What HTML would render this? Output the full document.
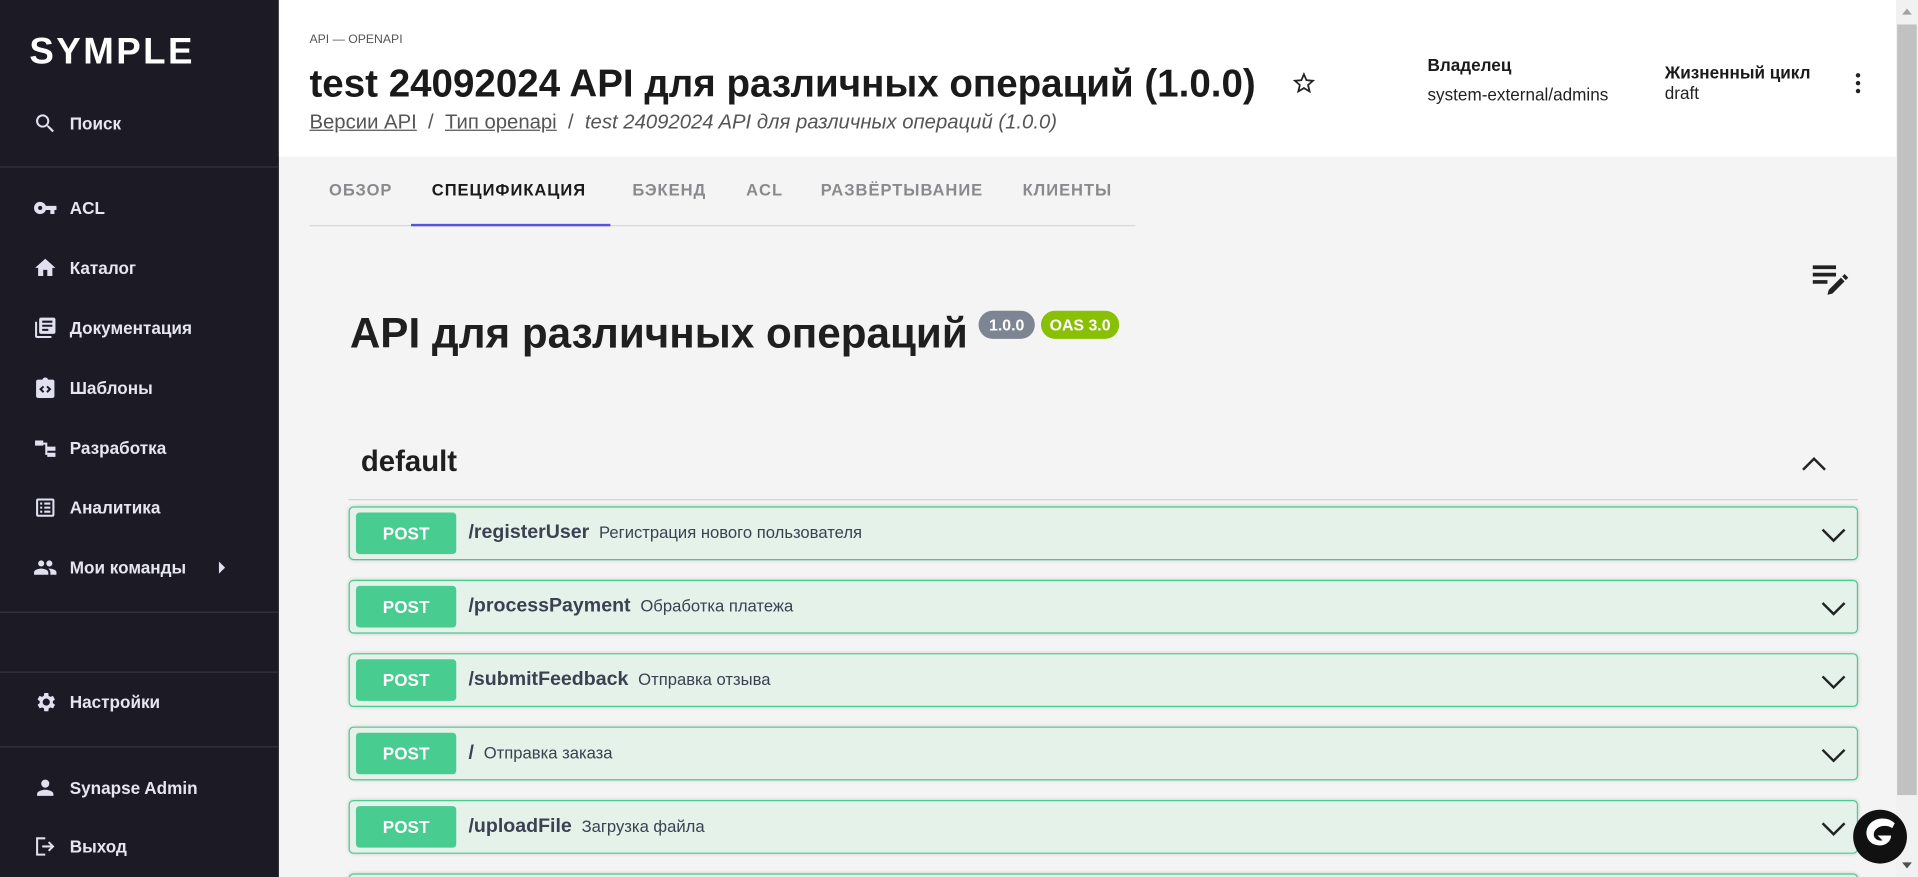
<!DOCTYPE html>
<html><head><meta charset="utf-8"><style>
*{box-sizing:border-box;margin:0;padding:0}
html,body{width:1918px;height:877px;overflow:hidden;background:#f4f4f4}
#w{width:1568px;height:717px;overflow:hidden;transform:scale(1.2232);transform-origin:0 0;position:relative;font-family:"Liberation Sans","DejaVu Sans",sans-serif;background:#f4f4f4}
.a{position:absolute}
#sb{left:0;top:0;width:228px;height:717px;background:#1c1b25;color:#e6e6f2}
.mi{position:absolute;left:0;width:228px;height:24px;display:flex;align-items:center;font-size:14px;font-weight:bold}
.mi svg{position:absolute;left:27px;width:20px;height:20px;fill:#e0e0f0}
.mi span{position:absolute;left:57px}
.dv{position:absolute;left:0;width:228px;height:1px;background:#33343f}
#hd{left:228px;top:0;width:1322px;height:128px;background:#fff}
.tab{position:absolute;top:148px;font-size:13.5px;font-weight:bold;letter-spacing:.8px;color:#8a8a8e}
.op{position:absolute;left:285px;width:1234px;height:44px;background:#e4f2ea;border:1px solid #49cc90;border-radius:4px;box-shadow:0 0 3px rgba(0,0,0,.15)}
.op .m{position:absolute;left:5px;top:4px;width:82px;height:34px;background:#49cc90;border-radius:3px;color:#fff;font-weight:bold;font-size:14px;text-align:center;line-height:34px}
.op .p{position:absolute;left:97px;top:12px;font-size:16px;font-weight:bold;color:#3b4151}
.op .p small{font-size:13.6px;font-weight:normal;margin-left:8px;color:#3b4151}
.op svg{position:absolute;right:8px;top:14px}
</style></head><body><div id="w">
<div id="sb" class="a">
<div class="a" style="left:24px;top:26px;font-size:30px;font-weight:bold;letter-spacing:2px;color:#fff">SYMPLE</div>
<div class="mi" style="top:89px"><svg viewBox="0 0 24 24"><path d="M15.5 14h-.8l-.3-.3A6.5 6.5 0 1 0 9.5 16a6.5 6.5 0 0 0 4.2-1.6l.3.3v.8l5 5 1.5-1.5-5-5zm-6 0a4.5 4.5 0 1 1 0-9 4.5 4.5 0 0 1 0 9z"/></svg><span>Поиск</span></div>
<div class="dv" style="top:136px"></div>
<div class="mi" style="top:158px"><svg viewBox="0 0 24 24"><path d="M12.6 10A6 6 0 1 0 12.6 14H17v4h4v-4h2v-4H12.6zM7 14a2 2 0 1 1 0-4 2 2 0 0 1 0 4z"/></svg><span>ACL</span></div>
<div class="mi" style="top:207px"><svg viewBox="0 0 24 24"><path d="M10 20v-6h4v6h5v-8h3L12 3 2 12h3v8z"/></svg><span>Каталог</span></div>
<div class="mi" style="top:256px"><svg viewBox="0 0 24 24"><path d="M4 6H2v14a2 2 0 0 0 2 2h14v-2H4V6zm16-4H8a2 2 0 0 0-2 2v12a2 2 0 0 0 2 2h12a2 2 0 0 0 2-2V4a2 2 0 0 0-2-2zm-1 9H9V9h10v2zm-4 4H9v-2h6v2zm4-8H9V5h10v2z"/></svg><span>Документация</span></div>
<div class="mi" style="top:305px"><svg viewBox="0 0 24 24"><path d="M19 4h-4.2C14.4 2.8 13.3 2 12 2s-2.4.8-2.8 2H5a2 2 0 0 0-2 2v14a2 2 0 0 0 2 2h14a2 2 0 0 0 2-2V6a2 2 0 0 0-2-2zm-8 11.6L9.6 17 6 13.4 9.6 10 11 11.4 8.8 13.4 11 15.6zm3.4 1.4L13 15.6l2.2-2.2L13 11.4l1.4-1.4 3.6 3.4L14.4 17z"/></svg><span>Шаблоны</span></div>
<div class="mi" style="top:354px"><svg viewBox="0 0 24 24"><path d="M2 5h8v5H2zM10 7h4v2h-4zM12 7h2v12h-2zM14 11h8v4h-8zM14 17h8v4h-8z"/></svg><span>Разработка</span></div>
<div class="mi" style="top:403px"><svg viewBox="0 0 24 24"><path d="M19 3H5a2 2 0 0 0-2 2v14a2 2 0 0 0 2 2h14a2 2 0 0 0 2-2V5a2 2 0 0 0-2-2zm0 16H5V5h14v14zM11 7h6v2h-6zm0 4h6v2h-6zm0 4h6v2h-6zM7 7h2v2H7zm0 4h2v2H7zm0 4h2v2H7z"/></svg><span>Аналитика</span></div>
<div class="mi" style="top:452px"><svg viewBox="0 0 24 24"><path d="M16 11a3 3 0 1 0 0-6 3 3 0 0 0 0 6zm-8 0a3 3 0 1 0 0-6 3 3 0 0 0 0 6zm0 2c-2.3 0-7 1.2-7 3.5V19h14v-2.5C15 14.2 10.3 13 8 13zm8 0h-1c1.2.8 2 2 2 3.5V19h6v-2.5c0-2.3-4.7-3.5-7-3.5z"/></svg><span>Мои команды</span><i style="position:absolute;left:179px;width:0;height:0;border-left:5px solid #e0e0f0;border-top:5px solid transparent;border-bottom:5px solid transparent"></i></div>
<div class="dv" style="top:500px"></div>
<div class="dv" style="top:549px"></div>
<div class="mi" style="top:562px"><svg viewBox="0 0 24 24"><path d="M19.4 13c0-.3.1-.6.1-1s0-.7-.1-1l2.1-1.6-2-3.5-2.5 1a7 7 0 0 0-1.7-1L15 3h-4l-.4 2.9a7 7 0 0 0-1.7 1l-2.5-1-2 3.5L6.6 11c0 .3-.1.6-.1 1s0 .7.1 1l-2.1 1.6 2 3.5 2.5-1c.5.4 1.1.7 1.7 1L11 21h4l.4-2.9c.6-.3 1.2-.6 1.7-1l2.5 1 2-3.5L19.4 13zM13 15.5a3.5 3.5 0 1 1 0-7 3.5 3.5 0 0 1 0 7z"/></svg><span>Настройки</span></div>
<div class="dv" style="top:610px"></div>
<div class="mi" style="top:632px"><svg viewBox="0 0 24 24"><path d="M12 12a4 4 0 1 0 0-8 4 4 0 0 0 0 8zm0 2c-2.7 0-8 1.3-8 4v2h16v-2c0-2.7-5.3-4-8-4z"/></svg><span>Synapse Admin</span></div>
<div class="mi" style="top:680px"><svg viewBox="0 0 24 24"><path d="M3 3h9v2H5v14h7v2H3zM16 7l5 5-5 5-1.4-1.4 2.6-2.6H9v-2h8.2l-2.6-2.6z"/></svg><span>Выход</span></div>
</div>
<div id="hd" class="a"></div>
<div class="a" style="left:253px;top:27px;font-size:10px;color:#555">API — OPENAPI</div>
<div class="a" style="left:253px;top:50px;font-size:31.5px;font-weight:bold;color:#1a1a1a;white-space:nowrap">test 24092024 API для различных операций (1.0.0)</div>
<svg class="a" style="left:1055px;top:57px" width="22" height="22" viewBox="0 0 24 24"><path fill="#222" d="M22 9.2l-7.2-.6L12 2 9.2 8.6 2 9.2l5.5 4.7L5.8 21 12 17.3 18.2 21l-1.6-7.1L22 9.2zM12 15.4l-3.8 2.3 1-4.3-3.3-2.9 4.4-.4L12 6.1l1.7 4 4.4.4-3.3 2.9 1 4.3z"/></svg>
<div class="a" style="left:253px;top:90px;font-size:16.6px;color:#555;white-space:nowrap"><u>Версии API</u> &nbsp;/&nbsp; <u>Тип openapi</u> &nbsp;/&nbsp; <i>test 24092024 API для различных операций (1.0.0)</i></div>
<div class="a" style="left:1167px;top:45px;font-size:14px;font-weight:bold;color:#1a1a1a">Владелец</div>
<div class="a" style="left:1167px;top:69px;font-size:14px;color:#222">system-external/admins</div>
<div class="a" style="left:1361px;top:51px;font-size:14px;font-weight:bold;color:#1a1a1a">Жизненный цикл</div>
<div class="a" style="left:1361px;top:68px;font-size:14px;color:#222">draft</div>
<svg class="a" style="left:1508px;top:57px" width="22" height="22" viewBox="0 0 24 24"><circle cx="12" cy="5" r="2" fill="#222"/><circle cx="12" cy="12" r="2" fill="#222"/><circle cx="12" cy="19" r="2" fill="#222"/></svg>
<div class="tab" style="left:269px">ОБЗОР</div>
<div class="tab" style="left:353px;color:#1a1a1a">СПЕЦИФИКАЦИЯ</div>
<div class="tab" style="left:517px">БЭКЕНД</div>
<div class="tab" style="left:610px">ACL</div>
<div class="tab" style="left:671px">РАЗВЁРТЫВАНИЕ</div>
<div class="tab" style="left:836px">КЛИЕНТЫ</div>
<div class="a" style="left:253px;top:184px;width:675px;height:1px;background:#d6d6d6"></div>
<div class="a" style="left:336px;top:183px;width:163px;height:2px;background:#5552e0"></div>
<svg class="a" style="left:1480px;top:214px" width="32" height="30" viewBox="0 0 32 30"><path fill="#222" d="M2 3h19v3H2zM2 9h19v3H2zM2 15h12v3H2zM14 27l1-4 10-10 3 3-10 10zM26 12l2-2 3 3-2 2z"/></svg>
<div class="a" style="left:286px;top:254px;font-size:34.5px;font-weight:bold;color:#1f1f1f;white-space:nowrap">API для различных операций</div>
<div class="a" style="left:800px;top:254px;width:46px;height:23px;border-radius:12px;background:#7d8492;color:#fff;font-size:13px;font-weight:bold;text-align:center;line-height:23px">1.0.0</div>
<div class="a" style="left:851px;top:254px;width:64px;height:23px;border-radius:12px;background:#89bf04;color:#fff;font-size:13px;font-weight:bold;text-align:center;line-height:23px">OAS 3.0</div>
<div class="a" style="left:295px;top:364px;font-size:24px;font-weight:bold;color:#1f1f1f">default</div>
<svg class="a" style="left:1471px;top:368px" width="24" height="22" viewBox="0 0 24 22"><path d="M3 16l9-9 9 9" fill="none" stroke="#222" stroke-width="2"/></svg>
<div class="a" style="left:285px;top:408px;width:1234px;height:1px;background:#d0d0d6"></div>
<div class="op" style="top:414px"><div class="m">POST</div><div class="p">/registerUser<small>Регистрация нового пользователя</small></div><svg width="22" height="16" viewBox="0 0 22 16"><path d="M2 4l9 9 9-9" fill="none" stroke="#222" stroke-width="2"/></svg></div>
<div class="op" style="top:474px"><div class="m">POST</div><div class="p">/processPayment<small>Обработка платежа</small></div><svg width="22" height="16" viewBox="0 0 22 16"><path d="M2 4l9 9 9-9" fill="none" stroke="#222" stroke-width="2"/></svg></div>
<div class="op" style="top:534px"><div class="m">POST</div><div class="p">/submitFeedback<small>Отправка отзыва</small></div><svg width="22" height="16" viewBox="0 0 22 16"><path d="M2 4l9 9 9-9" fill="none" stroke="#222" stroke-width="2"/></svg></div>
<div class="op" style="top:594px"><div class="m">POST</div><div class="p">/<small>Отправка заказа</small></div><svg width="22" height="16" viewBox="0 0 22 16"><path d="M2 4l9 9 9-9" fill="none" stroke="#222" stroke-width="2"/></svg></div>
<div class="op" style="top:654px"><div class="m">POST</div><div class="p">/uploadFile<small>Загрузка файла</small></div><svg width="22" height="16" viewBox="0 0 22 16"><path d="M2 4l9 9 9-9" fill="none" stroke="#222" stroke-width="2"/></svg></div>
<div class="op" style="top:714px"></div>
<div class="a" style="left:1550px;top:0;width:18px;height:717px;background:#f1f1f1"></div>
<div class="a" style="left:1551px;top:20px;width:16px;height:630px;background:#c1c1c1"></div>
<div class="a" style="left:1555px;top:7px;width:0;height:0;border-left:4px solid transparent;border-right:4px solid transparent;border-bottom:5px solid #a3a3a3"></div>
<div class="a" style="left:1555px;top:705px;width:0;height:0;border-left:4px solid transparent;border-right:4px solid transparent;border-top:5px solid #505050"></div>
<svg class="a" style="left:1514px;top:661px" width="46" height="46" viewBox="0 0 46 46"><circle cx="23" cy="23" r="22" fill="#111"/><path d="M35 12c-6-6-18-5-22 3-3 6 0 14 8 15 6 1 11-3 11-8H21l4 4c-4 1-8-2-7-6 1-5 9-8 15-4z" fill="#fff"/></svg>
</div></body></html>
